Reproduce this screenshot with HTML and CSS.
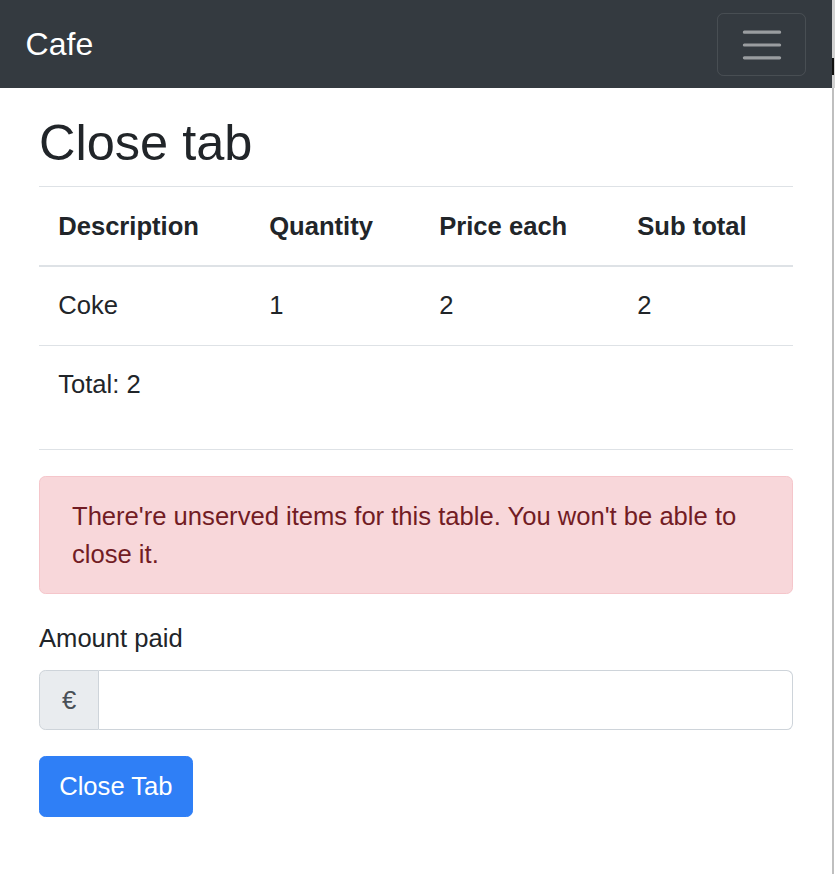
FILE: index.html
```html
<!DOCTYPE html>
<html lang="en">
<head>
<meta charset="utf-8">
<title>Cafe</title>
<link rel="stylesheet" href="styles.css">
</head>
<body>
<div class="window">
  <div class="page">
    <nav class="navbar">
      <a class="brand" href="#">Cafe</a>
      <button class="toggler" type="button" aria-label="Toggle navigation">
        <svg class="toggler-icon" viewBox="0 0 30 30" width="48" height="48">
          <path d="M4 7h22M4 15h22M4 23h22" stroke="rgba(255,255,255,0.5)" stroke-width="2" stroke-linecap="round" stroke-miterlimit="10"/>
        </svg>
      </button>
    </nav>
    <main class="container">
      <h1 class="title">Close tab</h1>
      <table class="table">
        <colgroup>
          <col class="c1"><col class="c2"><col class="c3"><col class="c4">
        </colgroup>
        <thead>
          <tr>
            <th>Description</th>
            <th>Quantity</th>
            <th>Price each</th>
            <th>Sub total</th>
          </tr>
        </thead>
        <tbody>
          <tr class="item-row">
            <td>Coke</td>
            <td>1</td>
            <td>2</td>
            <td>2</td>
          </tr>
          <tr class="total-row">
            <td colspan="4"><p class="total">Total: 2</p></td>
          </tr>
        </tbody>
      </table>
      <div class="alert">There're unserved items for this table. You won't be able to close it.</div>
      <form class="form">
        <div class="form-group">
          <label class="label" for="amount">Amount paid</label>
          <div class="input-group">
            <span class="prepend">€</span>
            <input class="input" id="amount" type="text">
          </div>
        </div>
        <button class="btn" type="button">Close Tab</button>
      </form>
    </main>
  </div>
  <div class="edge"></div>
</div>
</body>
</html>
```
FILE: styles.css
```css
* { box-sizing: border-box; }

html, body {
  margin: 0;
  padding: 0;
  background: #fff;
}

body {
  font-family: "Liberation Sans", Arial, Helvetica, sans-serif;
  font-size: 25.6px;
  line-height: 1.5;
  color: #212529;
}

.window {
  display: flex;
  min-height: 874px;
}

.page {
  width: 832px;
  flex: none;
}

.edge {
  width: 3px;
  flex: none;
  background:
    linear-gradient(#111, #111) 0 58px / 2px 17px no-repeat,
    linear-gradient(#d2d2d2, #d2d2d2) 0 0 / 3px 88px no-repeat,
    linear-gradient(to right, #bfbfbf 0, #bfbfbf 2px, #fff 2px);
}

.navbar {
  background: #343a40;
  height: 88px;
  padding: 12.8px 25.6px;
  display: flex;
  align-items: center;
  justify-content: space-between;
}

.brand {
  color: #fff;
  text-decoration: none;
  font-size: 32px;
  line-height: 48px;
  padding: 8px 0;
}

.toggler {
  width: 89px;
  height: 63px;
  padding: 6.4px 19.2px;
  border: 1px solid rgba(255, 255, 255, 0.1);
  border-radius: 6.4px;
  background: transparent;
  display: flex;
  align-items: center;
  justify-content: center;
  margin-top: 1px;
}

.toggler-icon {
  display: block;
  width: 48px;
  height: 48px;
}

.container {
  padding: 25.4px 39px 0;
}

.title {
  margin: 0 0 12px;
  font-size: 50.5px;
  line-height: 1.2;
  font-weight: 400;
  color: #212529;
}

.table {
  width: 100%;
  border-collapse: collapse;
  table-layout: fixed;
  margin-bottom: 26.6px;
  color: #212529;
}

.c1 { width: 211px; }
.c2 { width: 170px; }
.c3 { width: 198px; }
.c4 { width: 175px; }

.table th,
.table td {
  padding: 19.2px;
  text-align: left;
  vertical-align: top;
  border-top: 1px solid #dee2e6;
}

.table th {
  font-weight: 700;
  vertical-align: bottom;
  border-bottom: 2px solid #dee2e6;
  padding-top: 19.7px;
  padding-bottom: 19.7px;
}

.table tbody tr:last-child td {
  border-bottom: 1px solid #dee2e6;
}

.item-row td {
  padding-top: 19.7px;
  padding-bottom: 19.7px;
}

.total-row td {
  padding-top: 19.7px;
  padding-bottom: 19.7px;
}

.total {
  margin: 0 0 25.6px;
}

.alert {
  background: #f8d7da;
  border: 1px solid #f5c6cb;
  color: #721c24;
  border-radius: 6.4px;
  padding: 19.2px 32px;
  margin-bottom: 25.6px;
}

.form {
  margin: 0;
}

.form-group {
  margin-bottom: 25.6px;
}

.label {
  display: inline-block;
  margin-bottom: 12.8px;
}

.input-group {
  display: flex;
  height: 59.6px;
}

.prepend {
  flex: none;
  width: 60px;
  display: flex;
  align-items: center;
  justify-content: center;
  background: #e9ecef;
  border: 1px solid #ced4da;
  border-radius: 6.4px 0 0 6.4px;
  color: #495057;
  font-size: 25.6px;
}

.input {
  flex: 1;
  min-width: 0;
  height: 100%;
  border: 1px solid #ced4da;
  border-left: none;
  border-radius: 0 6.4px 6.4px 0;
  background: #fff;
  padding: 9.6px 19.2px;
  font: inherit;
  color: #495057;
}

.btn {
  display: inline-block;
  height: 61px;
  padding: 0 19.2px;
  font: inherit;
  color: #fff;
  background: #2f7ff6;
  border: 1px solid #2f7ff6;
  border-radius: 6.4px;
  cursor: pointer;
}
```
